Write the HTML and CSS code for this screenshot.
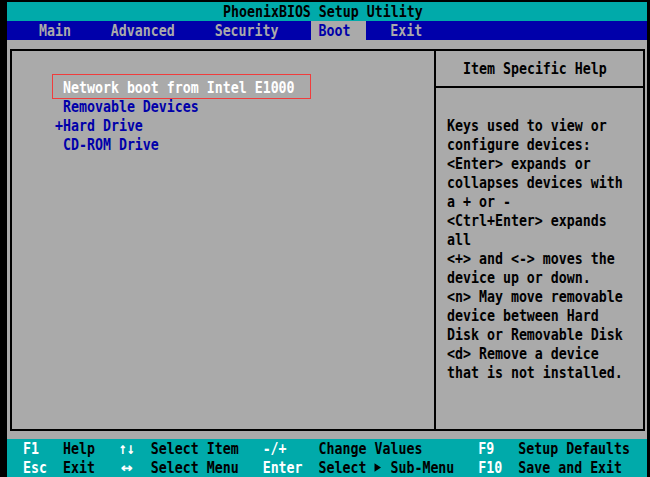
FILE: index.html
```html
<!DOCTYPE html>
<html>
<head>
<meta charset="utf-8">
<title>PhoenixBIOS Setup Utility</title>
<link rel="stylesheet" href="styles.css">
</head>
<body>
<div class="screen">
  <div class="title"><span class="t">PhoenixBIOS Setup Utility</span></div>
  <div class="menubar"><span class="t">    Main     Advanced     Security    </span><span class="tab-active"><span class="t"> Boot  </span></span><span class="t">   Exit</span></div>
  <div class="main">
    <div class="box">
      <div class="left">
        <div class="item sel"><span class="t"> Network boot from Intel E1000</span></div>
        <div class="item"><span class="t"> Removable Devices</span></div>
        <div class="item"><span class="t">+Hard Drive</span></div>
        <div class="item"><span class="t"> CD-ROM Drive</span></div>
      </div>
      <div class="right">
        <div class="help-head"><span class="t">Item Specific Help</span></div>
        <div class="help-body">
          <div class="line"><span class="t">Keys used to view or</span></div>
          <div class="line"><span class="t">configure devices:</span></div>
          <div class="line"><span class="t">&lt;Enter&gt; expands or</span></div>
          <div class="line"><span class="t">collapses devices with</span></div>
          <div class="line"><span class="t">a + or -</span></div>
          <div class="line"><span class="t">&lt;Ctrl+Enter&gt; expands</span></div>
          <div class="line"><span class="t">all</span></div>
          <div class="line"><span class="t">&lt;+&gt; and &lt;-&gt; moves the</span></div>
          <div class="line"><span class="t">device up or down.</span></div>
          <div class="line"><span class="t">&lt;n&gt; May move removable</span></div>
          <div class="line"><span class="t">device between Hard</span></div>
          <div class="line"><span class="t">Disk or Removable Disk</span></div>
          <div class="line"><span class="t">&lt;d&gt; Remove a device</span></div>
          <div class="line"><span class="t">that is not installed.</span></div>
        </div>
      </div>
    </div>
  </div>
  <div class="footer">
    <div class="frow"><span class="t">  <span class="k">F1</span>   Help   <span class="k">↑↓</span>  Select Item   <span class="k">-/+</span>    Change Values       <span class="k">F9</span>   Setup Defaults</span></div>
    <div class="frow"><span class="t">  <span class="k">Esc</span>  Exit   <span class="k lr">↔</span>  Select Menu   <span class="k">Enter</span>  Select <svg class="tri" width="8" height="19" viewBox="0 0 8 19"><polygon points="0.5,6 7,9.5 0.5,13" fill="#000"/></svg> Sub-Menu   <span class="k">F10</span>  Save and Exit</span></div>
  </div>
</div>
</body>
</html>
```

FILE: styles.css
```css
html, body {
  margin: 0;
  padding: 0;
  background: #000;
}

body {
  width: 650px;
  height: 477px;
  overflow: hidden;
  font-family: "DejaVu Sans Mono", "Liberation Mono", monospace;
  font-size: 13.288px;
  font-weight: bold;
  line-height: 19px;
}

.screen {
  margin: 2px 0 0 7px;
  width: 640px;
}

.t {
  display: inline-block;
  white-space: pre;
  transform: scaleY(1.24);
  transform-origin: 50% 50%;
  height: 19px;
}

.title {
  display: flex;
  height: 19px;
  background: #00aaaa;
  color: #000;
  padding-left: 216px;
}

.menubar {
  display: flex;
  height: 19px;
  background: #0000aa;
  color: #aaaaaa;
}

.tab-active {
  display: flex;
  height: 19px;
  background: #aaaaaa;
  color: #0000aa;
}

.main {
  height: 399px;
  box-sizing: border-box;
  background: #aaaaaa;
  padding: 9px 2px 8px 3px;
}

.box {
  display: flex;
  height: 382px;
  box-sizing: border-box;
  border: 2px solid #000;
}

.left {
  width: 422px;
  padding: 27px 0 0 43px;
  box-sizing: border-box;
}

.item {
  display: flex;
  height: 19px;
  color: #0000aa;
}

.item.sel {
  position: relative;
  color: #ffffff;
}

.item.sel::after {
  content: "";
  position: absolute;
  left: -3px;
  top: -4px;
  width: 259px;
  height: 25px;
  box-sizing: border-box;
  border: 1px solid #f03c3c;
}

.right {
  flex: 1;
  border-left: 2px solid #000;
  color: #000;
}

.help-head {
  display: flex;
  align-items: center;
  height: 35px;
  border-bottom: 2px solid #000;
  padding-left: 27px;
}

.help-body {
  padding: 28px 0 0 11px;
}

.line {
  display: flex;
  height: 19px;
}

.footer {
  background: #00aaaa;
  color: #000;
}

.frow {
  display: flex;
  height: 19px;
}

.k {
  color: #ffffff;
}

.lr {
  display: inline-block;
  width: 16px;
  text-align: center;
  transform: scaleX(1.5);
}

.tri {
  display: inline-block;
  vertical-align: top;
}
```
